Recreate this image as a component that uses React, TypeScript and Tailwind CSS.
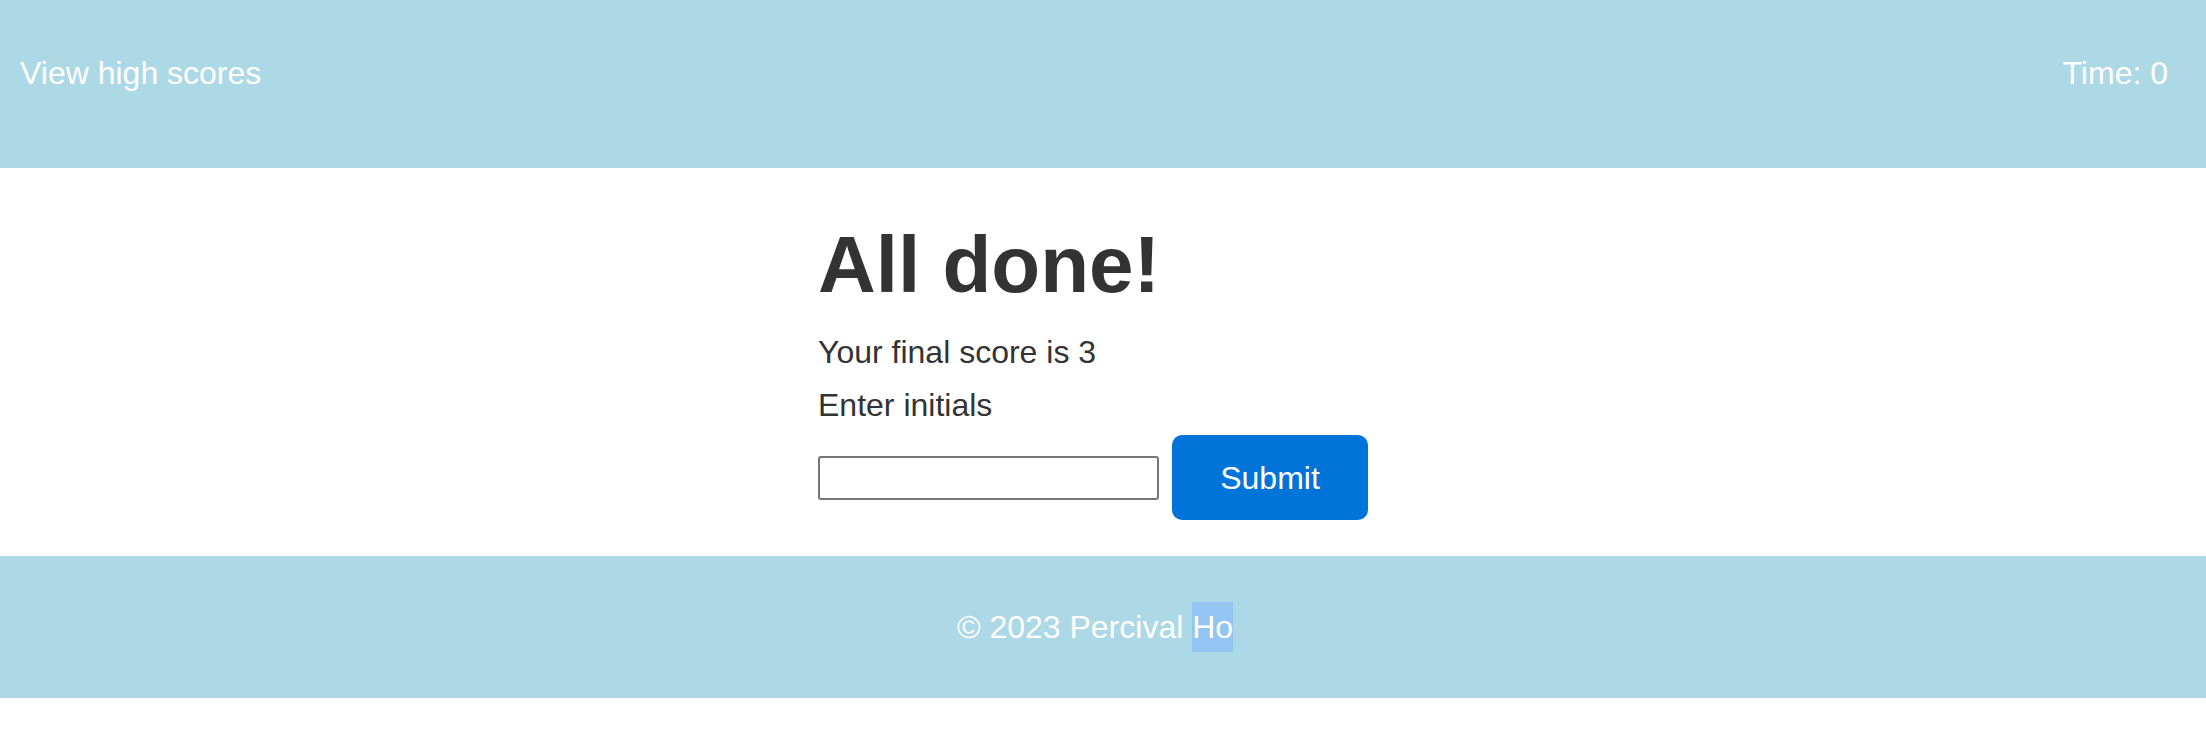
export default function App() {
  return (
    <div className="min-h-[736px] bg-white font-['Liberation_Sans',Arial,sans-serif] text-[#333333]">
      <header className="flex h-[168px] items-start justify-between bg-[#add8e6] pl-[20px] pr-[38px] pt-[55px] text-[32px] leading-[37px] text-white">
        <a href="#">View high scores</a>
        <span>Time: 0</span>
      </header>

      <main className="mx-auto w-[570px] pb-[36px] pt-[51px]">
        <h1 className="text-[80px] font-bold leading-[92px]">All done!</h1>
        <p className="mt-[23px] text-[32px] leading-[37px]">Your final score is 3</p>
        <p className="mt-[16px] text-[32px] leading-[37px]">Enter initials</p>
        <div className="mt-[11px] flex items-center gap-[13px]">
          <input
            type="text"
            className="h-[44px] w-[341px] rounded-[3px] border-2 border-[#767676] bg-white px-2 text-[24px]"
          />
          <button className="h-[85px] w-[196px] rounded-[10px] bg-[#0074d9] text-[32px] text-white">
            Submit
          </button>
        </div>
      </main>

      <footer className="flex h-[142px] items-center justify-center bg-[#add8e6] pr-[16px] text-[32px] leading-[37px] text-white">
        <p>
          © 2023 Percival <span className="bg-[#93c5f3] py-[7px]">Ho</span>
        </p>
      </footer>
    </div>
  );
}
